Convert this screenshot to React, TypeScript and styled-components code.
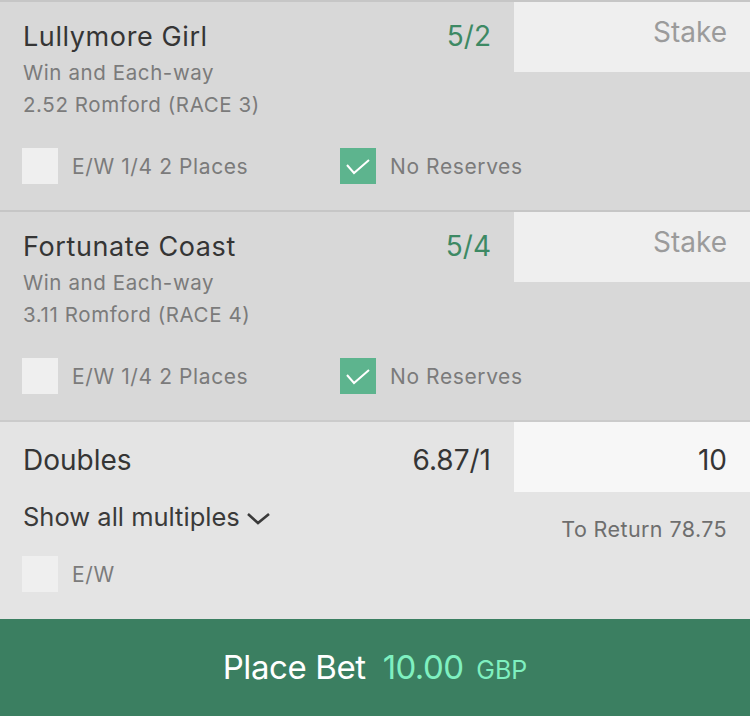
import React from 'react';
import styled, { createGlobalStyle } from 'styled-components';

interface Leg {
  name: string;
  odds: string;
  market: string;
  event: string;
}

const legs: Leg[] = [
  { name: 'Lullymore Girl', odds: '5/2', market: 'Win and Each-way', event: '2.52 Romford (RACE 3)' },
  { name: 'Fortunate Coast', odds: '5/4', market: 'Win and Each-way', event: '3.11 Romford (RACE 4)' },
];

export default function App() {
  return (
    <>
      <GlobalStyle />
      <StyledSlip>
        {legs.map((leg) => (
          <StyledLeg key={leg.name}>
            <StyledTop>
              <StyledInfo>
                <StyledNameRow>
                  <StyledName>{leg.name}</StyledName>
                  <StyledOdds>{leg.odds}</StyledOdds>
                </StyledNameRow>
                <StyledSubs>
                  <StyledSub>{leg.market}</StyledSub>
                  <StyledSub>{leg.event}</StyledSub>
                </StyledSubs>
              </StyledInfo>
              <StyledStake>Stake</StyledStake>
            </StyledTop>
            <StyledOptions>
              <StyledOption>
                <StyledCheck />
                <StyledLabel>E/W 1/4 2 Places</StyledLabel>
              </StyledOption>
              <StyledOption>
                <StyledCheck $on>
                  <svg width="36" height="36" viewBox="0 0 36 36">
                    <polyline points="7,17 14,25 29,12" fill="none" stroke="#fff" strokeWidth="2" />
                  </svg>
                </StyledCheck>
                <StyledLabel>No Reserves</StyledLabel>
              </StyledOption>
            </StyledOptions>
          </StyledLeg>
        ))}

        <StyledMultiple>
          <StyledTop>
            <StyledInfo $multi>
              <StyledNameRow>
                <StyledName $multi>Doubles</StyledName>
                <StyledOdds $multi>6.87/1</StyledOdds>
              </StyledNameRow>
            </StyledInfo>
            <StyledStake $filled>10</StyledStake>
          </StyledTop>
          <StyledMultiRow>
            <StyledShowAll>
              Show all multiples
              <svg width="26" height="16" viewBox="0 0 26 16">
                <polyline points="2,3 12,12 23,3" fill="none" stroke="#3a3a3a" strokeWidth="2.6" />
              </svg>
            </StyledShowAll>
            <StyledReturn>To Return 78.75</StyledReturn>
          </StyledMultiRow>
          <StyledOptions $multi>
            <StyledOption>
              <StyledCheck />
              <StyledLabel>E/W</StyledLabel>
            </StyledOption>
          </StyledOptions>
        </StyledMultiple>

        <StyledPlaceBet>
          <StyledPlaceText>Place Bet</StyledPlaceText>
          <StyledAmount>10.00</StyledAmount>
          <StyledCurrency>GBP</StyledCurrency>
        </StyledPlaceBet>
      </StyledSlip>
    </>
  );
}

const GlobalStyle = createGlobalStyle`
  body {
    margin: 0;
    background: #e4e4e4;
    font-family: Inter, "Liberation Sans", sans-serif;
  }
`;

const StyledSlip = styled.div`
  width: 750px;
  display: flex;
  flex-direction: column;
`;

const StyledLeg = styled.div`
  height: 208px;
  border-top: 2px solid #c6c6c6;
  background: #d8d8d8;
`;

const StyledMultiple = styled.div`
  height: 197px;
  border-top: 2px solid #cbcbcb;
  background: #e4e4e4;
`;

const StyledTop = styled.div`
  display: flex;
  align-items: flex-start;
`;

const StyledInfo = styled.div<{ $multi?: boolean }>`
  flex: 1;
  padding: ${(p) => (p.$multi ? '21px' : '18px')} 23px 0 23px;
`;

const StyledNameRow = styled.div`
  display: flex;
  justify-content: space-between;
  align-items: baseline;
`;

const StyledName = styled.div<{ $multi?: boolean }>`
  font-size: ${(p) => (p.$multi ? '28px' : '27px')};
  letter-spacing: ${(p) => (p.$multi ? '0' : '0.6px')};
  line-height: ${(p) => (p.$multi ? '35px' : '32px')};
  color: #353535;
`;

const StyledOdds = styled.div<{ $multi?: boolean }>`
  font-size: 28px;
  line-height: 32px;
  color: ${(p) => (p.$multi ? '#353535' : '#3d8964')};
`;

const StyledSubs = styled.div`
  margin-top: 4px;
`;

const StyledSub = styled.div`
  font-size: 20.5px;
  letter-spacing: 0.6px;
  line-height: 32px;
  color: #7b7b7b;
`;

const StyledStake = styled.div<{ $filled?: boolean }>`
  width: 236px;
  height: 70px;
  box-sizing: border-box;
  padding: ${(p) => (p.$filled ? '21px' : '13px')} 23px 0 0;
  text-align: right;
  font-size: 28px;
  line-height: 35px;
  background: ${(p) => (p.$filled ? '#f7f7f7' : '#efefef')};
  color: ${(p) => (p.$filled ? '#353535' : '#9b9b9b')};
`;

const StyledOptions = styled.div<{ $multi?: boolean }>`
  display: grid;
  grid-template-columns: 318px auto;
  padding: 0 22px;
  margin-top: ${(p) => (p.$multi ? '13px' : '27px')};
`;

const StyledOption = styled.div`
  display: flex;
  align-items: center;
  gap: 14px;
`;

const StyledCheck = styled.div<{ $on?: boolean }>`
  width: 36px;
  height: 36px;
  background: ${(p) => (p.$on ? '#5db48e' : '#efefef')};
  svg {
    display: block;
  }
`;

const StyledLabel = styled.span`
  font-size: 21px;
  letter-spacing: 0.6px;
  color: #7b7b7b;
`;

const StyledMultiRow = styled.div`
  display: flex;
  justify-content: space-between;
  align-items: flex-start;
  padding: 0 23px;
`;

const StyledShowAll = styled.div`
  display: flex;
  align-items: center;
  gap: 6px;
  margin-top: 9px;
  font-size: 25.5px;
  line-height: 32px;
  color: #3a3a3a;
  svg {
    margin-top: 4px;
  }
`;

const StyledReturn = styled.div`
  margin-top: 23px;
  font-size: 21.5px;
  letter-spacing: 0.4px;
  line-height: 28px;
  color: #6e6e6e;
`;

const StyledPlaceBet = styled.div`
  height: 97px;
  background: #3b7f61;
  display: flex;
  justify-content: center;
  align-items: baseline;
  padding-top: 28px;
  box-sizing: border-box;
`;

const StyledPlaceText = styled.span`
  font-size: 33px;
  letter-spacing: -0.4px;
  color: #ffffff;
  margin-right: 17px;
`;

const StyledAmount = styled.span`
  font-size: 33px;
  letter-spacing: -0.6px;
  color: #7ff0c0;
  margin-right: 13px;
`;

const StyledCurrency = styled.span`
  font-size: 25px;
  color: #7ff0c0;
`;
